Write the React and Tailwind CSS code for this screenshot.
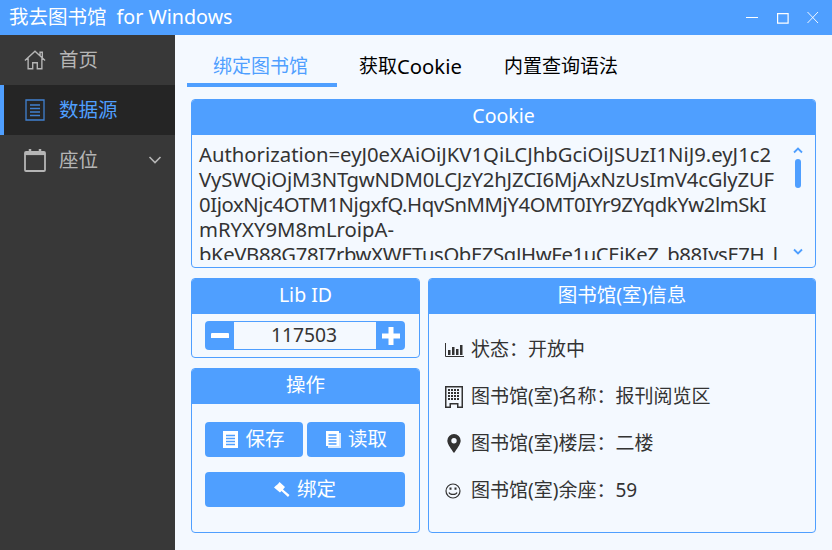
const FONT = "font-['Noto_Sans','Noto_Sans_CJK_SC',sans-serif]";

function Card({ title, className, children }) {
  return (
    <section className={`flex flex-col rounded-[4px] border border-[#4f9fff] bg-[#f4f9ff] overflow-hidden ${className}`}>
      <div className="h-[35px] shrink-0 bg-[#4f9fff] text-white text-[19.5px] pb-[3px] flex items-center justify-center">{title}</div>
      {children}
    </section>
  );
}

function NavItem({ icon, label, active, chevron }) {
  return (
    <div className={`h-[50px] flex items-center text-[19.5px] ${active ? "bg-[#252525] text-[#4f9fff] border-l-4 border-[#4f9fff] pl-[20px]" : "text-[#b5b5b5] pl-[24px]"}`}>
      <span className="w-[22px] h-[22px] flex items-center justify-center">{icon}</span>
      <span className="ml-[13px] flex-1 pb-[1px]">{label}</span>
      {chevron && (
        <svg width="14" height="10" viewBox="0 0 14 10" className="mr-[13px]" fill="none" stroke="#b5b5b5" strokeWidth="1.6"><path d="M1.5 2 7 7.5 12.5 2" /></svg>
      )}
    </div>
  );
}

function Btn({ icon, label, className }) {
  return (
    <div className={`h-[35px] rounded-[4px] bg-[#4f9fff] text-white text-[19.5px] flex items-center justify-center gap-[7px] ${className}`}>
      {icon}
      <span className="pb-[2px]">{label}</span>
    </div>
  );
}

function InfoRow({ icon, children }) {
  return (
    <div className="h-[47px] flex items-center text-[19px] text-[#333]">
      <span className="w-[26px] flex items-center">{icon}</span>
      <span>{children}</span>
    </div>
  );
}

const Doc = (
  <svg width="15" height="17" viewBox="0 0 15 17"><path fill="#fff" d="M0 0h15v17H0z" /><path stroke="#4f9fff" strokeWidth="1.3" d="M3 4.500h9M3 7.500h9M3 10.500h9M3 13.500h9" /></svg>
);
const Docs = (
  <svg width="16" height="17" viewBox="0 0 16 17"><path fill="#d6e8ff" d="M3 2h13v15H3z" /><path fill="#fff" d="M1 0h13v15H1z" /><path stroke="#4f9fff" strokeWidth="1.3" d="M3.500 4h8M3.500 7h8M3.500 10h8M3.500 13h8" /></svg>
);

export default function App() {
  return (
    <div className={`w-[832px] h-[550px] overflow-hidden flex flex-col bg-[#f4f9ff] ${FONT}`}>
      <header className="h-[35px] shrink-0 bg-[#4f9fff] text-white flex items-center pl-[9px] text-[19.5px]">
        <span className="pb-[1px]">我去图书馆</span>
        <span className="ml-[10px] pb-[1px] text-[19.7px]">for Windows</span>
        <div className="ml-auto flex items-center">
          <svg width="100" height="35" viewBox="0 0 100 35" fill="none" stroke="#fff">
            <path d="M14 17.500h12" strokeWidth="1" />
            <path d="M45.600 13.600h10.500v9.500h-10.500z" strokeWidth="1.200" />
            <path d="M75.500 12l10.500 11M86 12 75.500 23" strokeWidth="0.900" />
          </svg>
        </div>
      </header>
      <div className="flex-1 flex min-h-0">
        <aside className="w-[175px] shrink-0 bg-[#383838]">
          <NavItem
            label="首页"
            icon={
              <svg width="24" height="22" viewBox="0 0 24 22" fill="none" stroke="#b5b5b5" strokeWidth="1.500"><path d="M1 11.500 12 1.500l11 10M4.500 9v11.500h5v-6.500h5v6.500h5V9M17.500 6V2.500h2.500v6" /></svg>
            }
          />
          <NavItem
            active
            label="数据源"
            icon={
              <svg width="20" height="22" viewBox="0 0 20 22" fill="none" stroke="#4080cf" strokeWidth="1.300"><path d="M1 1h18v20H1zM5 6h10M5 9.500h10M5 13h10M5 16.500h10" /></svg>
            }
          />
          <NavItem
            chevron
            label="座位"
            icon={
              <svg width="22" height="24" viewBox="0 0 22 24" fill="none" stroke="#b5b5b5" strokeWidth="1.800"><path d="M2 4h18a1 1 0 0 1 1 1v17a1 1 0 0 1-1 1H2a1 1 0 0 1-1-1V5a1 1 0 0 1 1-1z" /><path d="M1 6h20" strokeWidth="2.200" /><path d="M6 1v5M16 1v5" strokeWidth="2.500" /></svg>
            }
          />
        </aside>
        <main className="flex-1 min-w-0 pl-[16px] pr-[16px] pt-[12px]">
          <nav className="flex h-[40px] ml-[-4px] text-[19px] text-black">
            <div className="w-[150px] flex items-center justify-center border-b-4 border-[#4f9fff] text-[#4f9fff] pr-[3px] pt-[2px]">绑定图书馆</div>
            <div className="ml-[22px] h-full flex items-center pb-[2px]">获取<span className="text-[20.3px]">Cookie</span></div>
            <div className="ml-[42px] h-full flex items-center pb-[2px]">内置查询语法</div>
          </nav>
          <Card title="Cookie" className="mt-[12px] h-[169px]">
            <div className="flex-1 min-h-0 flex">
              <div className="flex-1 min-w-0 mb-[7px] overflow-hidden pl-[7px] pt-[7px] text-[20.3px] leading-[25px] text-[#333] whitespace-nowrap">
                <div>Authorization=eyJ0eXAiOiJKV1QiLCJhbGciOiJSUzI1NiJ9.eyJ1c2</div>
                <div className="tracking-[-0.18px]">VySWQiOjM3NTgwNDM0LCJzY2hJZCI6MjAxNzUsImV4cGlyZUF</div>
                <div className="tracking-[-0.4px]">0IjoxNjc4OTM1NjgxfQ.HqvSnMMjY4OMT0IYr9ZYqdkYw2lmSkI</div>
                <div>mRYXY9M8mLroipA-</div>
                <div className="tracking-[-0.38px]">bKeVB88G78I7rbwXWETusObEZSqJHwFe1uCEiKeZ_b88IysE7H_l</div>
              </div>
              <div className="w-[34px] shrink-0 flex flex-col items-center pt-[12px] pb-[12px]">
                <svg width="10" height="7" viewBox="0 0 10 7" fill="none" stroke="#4f9fff" strokeWidth="1.800"><path d="M1 5.500 5 1.500l4 4" /></svg>
                <div className="w-[6px] h-[29px] mt-[5px] rounded-full bg-[#4f9fff]" />
                <svg width="10" height="7" viewBox="0 0 10 7" fill="none" stroke="#4f9fff" strokeWidth="1.800" className="mt-auto"><path d="M1 1.500 5 5.500l4-4" /></svg>
              </div>
            </div>
          </Card>
          <div className="mt-[10px] flex gap-[8px] h-[255px]">
            <div className="w-[229px] shrink-0 flex flex-col gap-[10px]">
              <Card title="Lib ID" className="h-[80px]">
                <div className="ml-[13px] mr-[14px] mt-[7px] h-[29px] rounded-[4px] bg-[#4f9fff] flex overflow-hidden">
                  <div className="w-[29px] flex items-center justify-center">
                    <svg width="18" height="6" viewBox="0 0 18 6"><path fill="#fff" d="M0 1a1 1 0 0 1 1-1h16a1 1 0 0 1 1 1v4H0z" /></svg>
                  </div>
                  <div className="flex-1 my-[1px] bg-[#f4f9ff] flex items-center justify-center text-[19.3px] pr-[2px] text-[#333]">117503</div>
                  <div className="w-[29px] flex items-center justify-center">
                    <svg width="18" height="18" viewBox="0 0 18 18"><path fill="#fff" d="M6.500 0h5v6.500H18v5h-6.500V18h-5v-6.500H0v-5h6.500z" /></svg>
                  </div>
                </div>
              </Card>
              <Card title="操作" className="flex-1">
                <div className="pl-[13px] pr-[14px] pt-[18px] flex flex-col gap-[15px]">
                  <div className="flex gap-[4px]">
                    <Btn icon={Doc} label="保存" className="flex-1" />
                    <Btn icon={Docs} label="读取" className="flex-1" />
                  </div>
                  <Btn
                    label="绑定"
                    icon={
                      <svg width="16" height="15" viewBox="0 0 16 15"><path fill="#fff" d="M5.500 0 11 5 9 7.500l6.500 5.500-1.500 2-6.500-6L6 10.500 0 5.500 1.500 4 4 2z" /></svg>
                    }
                  />
                </div>
              </Card>
            </div>
            <Card title="图书馆(室)信息" className="flex-1">
              <div className="pl-[16px] pt-[12px]">
                <InfoRow
                  icon={
                    <svg width="19" height="14" viewBox="0 0 19 14"><path fill="none" stroke="#333" d="M.5 0v13.500H19" /><path fill="#333" d="M3 7h2.500v5H3zM7 4h2.500v8H7zM11 6h2.500v6H11zM15 2h2.500v10H15z" /></svg>
                  }
                >状态：开放中</InfoRow>
                <InfoRow
                  icon={
                    <svg width="18" height="22" viewBox="0 0 18 22"><path fill="#333" d="M0 0h18v22h-6v-3.500H6V22H0zM1.500 1.500v19H4.500v-3.500h9v3.500h3v-19z" /><path stroke="#333" strokeWidth="2" strokeDasharray="2 1" d="M3 4h12M3 7h12M3 10h12M3 13h12" /></svg>
                  }
                >图书馆(室)名称：报刊阅览区</InfoRow>
                <InfoRow
                  icon={
                    <svg width="14" height="19" viewBox="0 0 14 19" className="ml-[2px]"><path fill="#333" fillRule="evenodd" d="M7 0a6.700 6.700 0 0 1 6.700 6.700C13.700 10 9.500 15.500 7 19 4.500 15.500.3 10 .3 6.700A6.700 6.700 0 0 1 7 0zm0 4a2.700 2.700 0 1 0 0 5.400A2.700 2.700 0 0 0 7 4z" /></svg>
                  }
                >图书馆(室)楼层：二楼</InfoRow>
                <InfoRow
                  icon={
                    <svg width="16" height="16" viewBox="0 0 16 16" fill="none" stroke="#333" strokeWidth="1.200"><circle cx="8" cy="8" r="7" /><path d="M4 9.500c1 2.600 7 2.600 8 0" /><path fill="#333" stroke="none" d="M4.500 4.500h2v2.200h-2zM9.500 4.500h2v2.200h-2z" /></svg>
                  }
                >图书馆(室)余座：59</InfoRow>
              </div>
            </Card>
          </div>
        </main>
      </div>
    </div>
  );
}
